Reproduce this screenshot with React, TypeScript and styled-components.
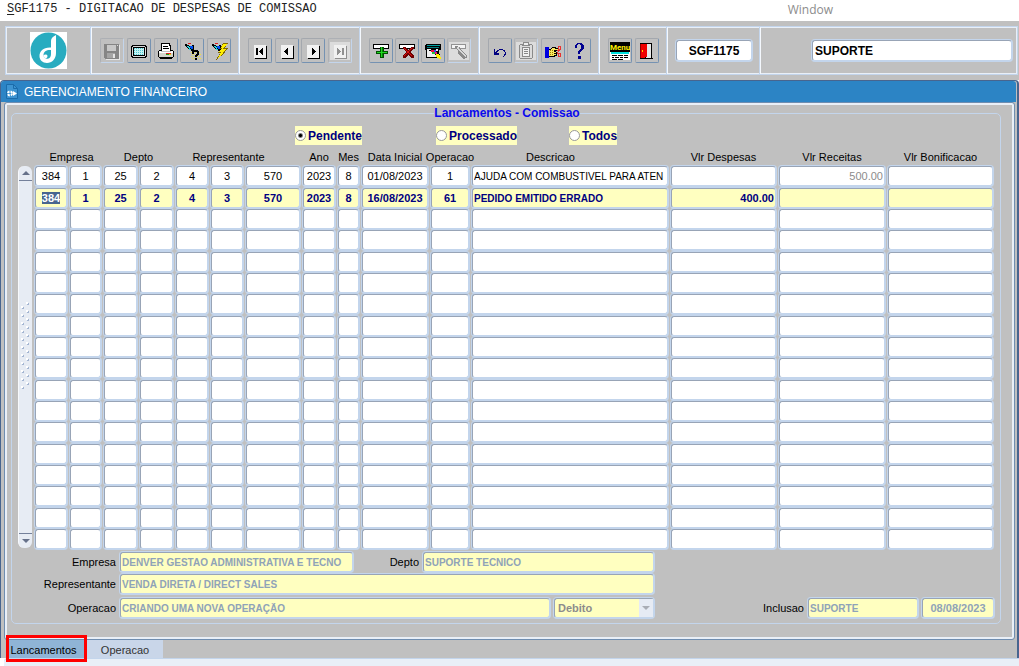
import React, { useEffect, useRef } from "react";
import styled, { createGlobalStyle, css } from "styled-components";

const GlobalStyle = createGlobalStyle`
  * { box-sizing: border-box; }
  body { margin: 0; background: #fff; font: 11px/14px "Liberation Sans", Arial, sans-serif; color: #000; }
  button, input, select { font: inherit; color: inherit; margin: 0; }
`;

const face = "#c0c0c0";
const line = "#c3d5ec";
const pale = "#e9eff7";
const edge = "#98a4b6";
const yellow = "#ffffc0";

const Page = styled.div`
  min-height: 100vh;
  display: flex;
  flex-direction: column;
`;

const MenuBar = styled.header`
  height: 21px;
  padding: 0 186px 0 7px;
  display: flex;
  justify-content: space-between;
`;
const Title = styled.h1`
  margin: 0;
  font: 12px/19px "Liberation Mono", "Courier New", monospace;
  color: #222;
  u { text-underline-offset: 2px; }
`;
const MenuLink = styled.a`
  font: 12px/19px "Open Sans", sans-serif;
  color: #8c8c8c;
  text-decoration: none;
`;

const ToolArea = styled.div`
  background: ${face};
  padding: 5px 1px 5px 5px;
`;
const Toolbar = styled.div`
  height: 49px;
  display: flex;
  border: 1px solid ${line};
  box-shadow: inset 0 0 0 1px ${pale};
`;
const Section = styled.div<{ $w?: number }>`
  ${(p) => (p.$w ? css`width: ${p.$w}px; flex: none;` : css`flex: 1;`)}
  display: flex;
  align-items: center;
  justify-content: space-between;
  padding: 0 8px;
  border-right: 1px solid #f4f8fd;
  box-shadow: inset -1px 0 0 ${line};
  &:last-child { border-right: 0; box-shadow: none; padding: 0 5px 0 51px; }
`;
const LogoBox = styled.div`
  width: 37px;
  height: 37px;
  margin: 0 auto;
  background: #fff;
`;
const ToolButton = styled.button`
  width: 24px;
  height: 25px;
  padding: 0;
  display: grid;
  place-items: center;
  background: ${face};
  border: 1px solid;
  border-color: #a4a8ae #7592b2 #7592b2 #a4a8ae;
  border-radius: 2px;
  &:disabled { border-color: #adb0b5 ${line} ${line} #adb0b5; }
  svg { display: block; }
`;

const fieldBox = css`
  border: 1px solid;
  border-color: ${edge} ${line} ${line} ${edge};
  border-radius: 3px;
  box-shadow: 0 0 0 1px ${line};
  outline: none;
`;
const ToolField = styled.input`
  ${fieldBox}
  width: 100%;
  height: 21px;
  padding: 0 2px;
  background: #fff;
  font-weight: bold;
  font-size: 12px;
`;
const CodeField = styled(ToolField)`
  text-align: center;
`;

const Frame = styled.main`
  background: ${face};
  border: solid #48658f;
  border-width: 1px 2px 0 1px;
  border-radius: 4px 4px 0 0;
`;
const FrameTitle = styled.div`
  height: 21px;
  display: flex;
  align-items: center;
  gap: 6px;
  padding-left: 5px;
  margin-right: 1px;
  background: #2c84c5;
  border-radius: 3px 3px 0 0;
  h2 { margin: 0; font: 12px/20px "Liberation Sans", Arial, sans-serif; color: #fff; }
`;
const Panel = styled.div`
  margin: 0 2px 0 3px;
  padding: 1px 13px 15px 4px;
  border: 1px solid #6f8db0;
  border-radius: 3px;
  box-shadow: inset 0 0 0 2px ${pale};
`;
const Group = styled.fieldset`
  min-width: 0;
  margin: 2px 0 0 2px;
  padding: 6px 4px 5px 6px;
  border: 1px solid ${line};
  border-radius: 5px;
`;
const Legend = styled.legend`
  margin: 0 auto;
  padding: 0;
  color: #0a0aee;
  font-size: 12px;
  font-weight: bold;
`;

const Filters = styled.div`
  display: grid;
  grid-template-columns: 141px 133px 48px;
  justify-content: center;
  justify-items: start;
  padding-right: 102px;
`;
const FilterLabel = styled.label`
  height: 19px;
  display: flex;
  gap: 2px;
  background: ${yellow};
  color: #000080;
  font-size: 12px;
  line-height: 20px;
  font-weight: bold;
`;
const Radio = styled.input`
  appearance: none;
  width: 11px;
  height: 11px;
  margin-top: 4px;
  border: 1px solid #999;
  border-radius: 50%;
  background: #fff;
  &:checked { background: radial-gradient(circle, #000 0 1px, #fff 3px); }
`;

const GridArea = styled.div`
  display: flex;
  gap: 3px;
`;
const Scrollbar = styled.div`
  width: 14px;
  flex: none;
  margin: 21px 0 2px;
  display: grid;
  grid-template-rows: 15px 1fr 15px;
  background: #e7ecf4;
  border-left: 1px solid #f7f9fc;
  border-radius: 6px;
  overflow: hidden;
`;
const Grip = styled.div`
  align-self: center;
  padding-bottom: 18px;
  svg { display: block; }
`;
const ScrollButton = styled.button<{ $down?: boolean }>`
  padding: 0;
  display: grid;
  place-items: center;
  background: transparent;
  border: 0;
  ${(p) => (p.$down ? "border-top" : "border-bottom")}: 1px solid #74809a;
`;

const Table = styled.table`
  flex: 1;
  width: 100%;
  min-width: 0;
  table-layout: fixed;
  border-collapse: collapse;
`;
const Th = styled.th<{ $left?: number; $right?: number }>`
  height: 21px;
  padding: 2px ${(p) => p.$right ?? 3}px 0 ${(p) => p.$left ?? 0}px;
  font-weight: normal;
  vertical-align: middle;
  div { display: flex; justify-content: center; white-space: nowrap; }
`;
const BodyRows = styled.tbody`
  td { padding: 0 3px 0 0; vertical-align: top; height: 21px; line-height: 0; }
  tr:nth-child(3n + 1) td { height: 22px; }
`;
const Cell = styled.input<{ $on?: boolean; $muted?: boolean; $align?: string; $caps?: boolean }>`
  ${fieldBox}
  display: block;
  width: 100%;
  height: 20px;
  padding: 0 1px;
  background: #fff;
  font-size: ${(p) => (p.$caps ? 10 : 11)}px;
  line-height: 14px;
  text-align: ${(p) => p.$align ?? "center"};
  color: ${(p) => (p.$muted ? "#8c8c8c" : "#000")};
  ${(p) => p.$on && css`background: ${yellow}; color: #000080; font-weight: bold;`}
  &::selection { background: #48658f; color: #fff; }
`;

const Details = styled.div`
  display: flex;
  flex-direction: column;
  padding: 2px 2px 0 0;
`;
const Line = styled.div<{ $gap?: number }>`
  display: flex;
  align-items: center;
  height: 20px;
  margin-top: ${(p) => p.$gap ?? 0}px;
`;
const FieldLabel = styled.label<{ $w: number; $push?: boolean }>`
  width: ${(p) => p.$w}px;
  flex: none;
  padding-right: 4px;
  text-align: right;
  ${(p) => p.$push && "margin-left: auto;"}
`;
const Info = styled.input<{ $w: number; $date?: boolean }>`
  ${fieldBox}
  width: ${(p) => p.$w}px;
  height: 20px;
  padding: 0 1px;
  background: ${yellow};
  color: #8fa3b8;
  font-weight: bold;
  font-size: ${(p) => (p.$date ? 11 : 10)}px;
  text-align: ${(p) => (p.$date ? "center" : "left")};
  margin-right: 4px;
  &:last-child { margin-right: 0; }
`;
const SelectBox = styled.div`
  position: relative;
  width: 100px;
  height: 20px;
  svg { position: absolute; right: 1px; top: 1px; pointer-events: none; }
`;
const Select = styled.select`
  ${fieldBox}
  appearance: none;
  width: 100%;
  height: 20px;
  padding: 0 3px;
  background: ${yellow};
  color: #8c8c8c;
  font-weight: bold;
  opacity: 1;
`;

const Tabs = styled.nav`
  display: flex;
  height: 18px;
  padding-left: 5px;
`;
const Tab = styled.button<{ $active?: boolean }>`
  position: relative;
  width: ${(p) => (p.$active ? 81 : 76)}px;
  padding: ${(p) => (p.$active ? "2px 6px 0 0" : "2px 0 0 0")};
  border: 0;
  background: ${(p) => (p.$active ? "#8fb4d6" : "#c9d6e9")};
  color: ${(p) => (p.$active ? "#000" : "#333")};
`;
const Marker = styled.span`
  position: absolute;
  inset: -5px 0 -4px 0;
  border: 3px solid #f00;
`;
const Footer = styled.footer`
  flex: 1;
  min-height: 8px;
  margin-left: 4px;
  background: ${pale};
  border-top: 1px solid ${line};
  border-radius: 4px 0 0 0;
`;

/* Toolbar glyphs, drawn on a 20x20 pixel grid. */
const Glyph = ({ children }: { children: React.ReactNode }) => (
  <svg width="20" height="20" viewBox="0 0 20 20" shapeRendering="crispEdges" aria-hidden="true">{children}</svg>
);

const Flashlight = () => (
  <>
    <path d="M3 3h2v1h2v1h3V4h2v5h-1v1H9V9H7V8H6V7H5V6H4V5H3z" fill="#000" />
    <path d="M8 5h3v3H9V7H8z" fill="#0050f0" />
    <path d="M5 5h2v1h1v2h1v1H7V7H6V6H5z" fill="#20d0e0" />
    <path d="M6 2h3v1H6z" fill="#e02020" />
  </>
);

const NavGlyph = ({ d, off }: { d: string; off?: boolean }) => (
  <Glyph>
    {off && <path d="M0 1h20v18H0z" fill="#dcdcdc" />}
    <path d="M5 5h12v13H5z" fill={off ? "#8f8f8f" : "#000"} />
    <path d="M4 4h12v13H4z" fill="#f1f1f1" />
    <path d={d} fill={off ? "#909090" : "#000"} />
  </Glyph>
);

const icons: Record<string, React.ReactNode> = {
  save: (
    <Glyph>
      <path d="M2 3h15v15H3v-1H2z" fill="#858585" />
      <path d="M5 4h9v6H5z" fill="#c8c8c8" />
      <path d="M15 4h1v1h-1z" fill="#ddd" />
      <path d="M5 12h8v5H5z" fill="#a4a4a4" />
      <path d="M11 13h2v4h-2z" fill="#e4e4e4" />
      <path d="M17 4h1v15H4v-1h13z" fill="#e6e6e6" />
    </Glyph>
  ),
  screen: (
    <Glyph>
      <path d="M3 4h14v1h1v11h-1v1H3v-1H2V5h1z" fill="#000" />
      <path d="M4 5h12v1h1v9h-1v1H4v-1H3V6h1z" fill="#d8d8d8" />
      <path d="M4 6h12v9H4z" fill="#000" />
      <path d="M5 7h10v7H5z" fill="#c4f4f4" />
      <path d="M5 7.500h10M5 9.500h10M5 11.500h10M5 13.500h10" stroke="#50c8d0" strokeDasharray="1 1" />
    </Glyph>
  ),
  print: (
    <Glyph>
      <path d="M5 2h9v2h1v6H5z" fill="#000" />
      <path d="M6 3h7v2h1v5H6z" fill="#fff" />
      <path d="M7 5h5v1H7zM7 7h6v1H7z" fill="#000" />
      <path d="M3 9h2v2h10V9h2v1h1v6h-1v1H3v-1H2v-6h1z" fill="#000" />
      <path d="M3 10h2v1h10v-1h2v2H3z" fill="#fff" />
      <path d="M3 12h14v4H3z" fill="#d4d4cc" />
      <path d="M10 12h5v1h-5z" fill="#e02020" />
      <path d="M10 13h3v1h-3z" fill="#20a020" />
      <path d="M13 13h2v1h-2z" fill="#e8e000" />
      <path d="M4 17h12v1H4z" fill="#000" />
    </Glyph>
  ),
  query: (
    <Glyph>
      <Flashlight />
      <path d="M9 11.500h10M10 13.500h9M9 15.500h10M10 17.500h9" stroke="#f0e040" strokeDasharray="1 1" />
      <path d="M11 9h5v1h1v4h-1v1h-1v1h-2v-2h1v-1h1v-2h-3v2h-2v-3h1zM13 17h2v2h-2z" fill="#000" />
    </Glyph>
  ),
  execute: (
    <Glyph>
      <Flashlight />
      <path d="M14 2h5l-3 5h3l-4 4h2L7 19l4-7H8l4-4h-1z" fill="#806800" />
      <path d="M14 3h4l-4 5h4l-5 4h2l-6 5 3-6H9l4-4h-1z" fill="#ffee00" />
    </Glyph>
  ),
  first: <NavGlyph d="M6 7h2v7H6zM9 10h1V9h1V8h1V7h1v7h-1v-1h-1v-1h-1v-1H9z" />,
  prev: <NavGlyph d="M7 10h1V9h1V8h1V7h1v7h-1v-1H9v-1H8v-1H7z" />,
  next: <NavGlyph d="M9 7h1v1h1v1h1v1h1v1h-1v1h-1v1h-1v1H9z" />,
  last: <NavGlyph off d="M7 7h1v1h1v1h1v1h1v1h-1v1H9v1H8v1H7zM12 7h2v7h-2z" />,
  add: (
    <Glyph>
      <path d="M2 3h16v5H2z" fill="#000" />
      <path d="M3 4h14v3H3z" fill="#fff" />
      <path d="M9 6h4v4h4v3h-4v4H9v-4H5v-3h4z" fill="#005000" />
      <path d="M10 6h1v5h5v1h-5v4h-1v-4H6v-1h4z" fill="#20d820" />
      <path d="M11 7h1v4h-1zM11 12h1v4h-1z" fill="#008800" />
    </Glyph>
  ),
  remove: (
    <Glyph>
      <path d="M2 3h16v5H2z" fill="#000" />
      <path d="M3 4h14v3H3z" fill="#fff" />
      <path d="M6 6h3v1h1v1h1v1h1V8h1V7h1V6h3v2h-1v1h-1v1h-1v2h1v1h1v1h1v3h-3v-1h-1v-1h-1v-1h-1v1h-1v1H9v1H6v-3h1v-1h1v-1h1v-2H8V9H7V8H6z" fill="#700000" />
      <path d="M7 7h1v1h1v1h1v1h2V9h1V8h1V7h1v1h-1v1h-1v1h-1v2h1v1h1v1h1v1h-1v-1h-1v-1h-1v-1h-2v1H9v1H8v1H7v-1h1v-1h1v-1h1v-2H9V9H8V8H7z" fill="#d81010" />
    </Glyph>
  ),
  lock: (
    <Glyph>
      <path d="M3 3h15v6h-2v8H3V9H2V4h1z" fill="#000" />
      <path d="M4 4h13v1H4z" fill="#00a0a0" />
      <path d="M4 6h12v1H4z" fill="#008080" />
      <path d="M4 8h11v8H4z" fill="#f0f0f0" />
      <path d="M6 9h2V8h5v2h2v3h2v2h-3v-1h-2v-1h-2v-2H8v-1H6z" fill="#000" />
      <path d="M8 9h3v2H8z" fill="#f01040" />
      <path d="M11 9h2v2h-2z" fill="#3040f0" />
      <path d="M9 11h3v2H9z" fill="#20c040" />
      <path d="M12 11h2v2h-2z" fill="#f01080" />
      <path d="M13 13h3v1h1v2h1v2h-2v-1h-2v-1h-1z" fill="#fff000" />
    </Glyph>
  ),
  clear: (
    <Glyph>
      <path d="M0 1h20v18H0z" fill="#dcdcdc" />
      <path d="M2 3h15v5H2z" fill="#929292" />
      <path d="M3 4h13v3H3z" fill="#f4f4f4" />
      <path d="M6 5h3v1h2v2h1v1h1v1h1v1h1v1h1v1h1v1h1v3h-2v1h-2v-1h-1v-1h-1v-1h-1v-1h-1v-1h-1v-2H9v-2H8V8H7V7H6z" fill="#8a8a8a" />
      <path d="M8 6h2v2h1v1h1v1h1v1h1v1h1v1h1v1h1v2h-1v-1h-1v-1h-1v-1h-1v-1h-1v-1h-1v-1h-1V9H9V8H8z" fill="#d8d8d8" />
    </Glyph>
  ),
  undo: (
    <Glyph>
      <path d="M4 8h1v3h1v-1h1V9h2V8h4v1h2v2h1v3h-1v1h-1v1h-1v-1h1v-2h1v-2h-1v-1h-1V9H9v1H8v1H7v1h2v2H4z" fill="#000080" />
    </Glyph>
  ),
  paste: (
    <Glyph>
      <path d="M0 1h20v18H0z" fill="#dcdcdc" />
      <path d="M4 3h3V1h6v2h3v1h1v13h-1v1H4v-1H3V4h1z" fill="#8a8a8a" />
      <path d="M4 4h12v13H4z" fill="#dcdcdc" />
      <path d="M6 6h8v10H6z" fill="#8a8a8a" />
      <path d="M7 7h6v8H7z" fill="#f1f1f1" />
      <path d="M8 8h4v1H8zM8 10h4v1H8zM8 12h4v1H8z" fill="#888" />
      <path d="M6 3h8v2H6z" fill="#8a8a8a" />
      <path d="M8 2h4v2H8z" fill="#eee" />
    </Glyph>
  ),
  cut: (
    <Glyph>
      <path d="M2 6h4v11H2z" fill="#0000e0" />
      <path d="M6 8h2V7h1V6h4v1h3v3h-3v1h2v2h-1v2h-2v1H6z" fill="#000" />
      <path d="M6 9h2V8h1V7h3v1h3v1h-4v2h2v1h-2v1h2v1h-2v1H6z" fill="#f8e860" />
      <path d="M7.500 9v6M9.500 9v5" stroke="#a08000" strokeDasharray="1 1" />
      <path d="M15.500 5.500h2v3h-2zM15.500 12.500h2v3h-2zM14 9.500h2M14 12.500l3-4" stroke="#e83030" fill="none" />
    </Glyph>
  ),
  help: (
    <Glyph>
      <path d="M8 2h5v1h1v1h1v4h-1v1h-1v1h-1v1h-1v2H9v-3h1V9h1V8h1V4h-1V3H9v1H8v3H6V4h1V3h1zM9 15h3v3H9z" fill="#000090" />
    </Glyph>
  ),
  menu: (
    <Glyph>
      <path d="M0 1h20v9H0z" fill="#000" />
      <text x="0" y="9" fill="#ffee00" fontSize="8" fontWeight="bold" fontFamily="Roboto, sans-serif">Menu</text>
      <path d="M0 10h20v9H0z" fill="#fff" />
      <path d="M0 10h20v1H0z" fill="#000" />
      <path d="M1 11h18v2H1z" fill="#00e0e0" />
      <path d="M2 14h5v1H2zM8 14h5v1H8zM14 14h4v1h-4zM2 16h2v1H2zM5 16h4v1H5zM10 16h3v1h-3zM14 16h4v1h-4zM2 18h5v1H2zM8 18h5v1H8z" fill="#000" />
    </Glyph>
  ),
  exit: (
    <Glyph>
      <path d="M3 2h12v15h1v1H3z" fill="#000" />
      <path d="M9 3h5v14H9z" fill="#e8e8e8" />
      <path d="M4 3h6v13H8v1H4z" fill="#f00000" />
      <path d="M3 3h1v14H3z" fill="#900000" />
      <path d="M5 9h1v2H5z" fill="#ffd000" />
    </Glyph>
  ),
};

type Tool = [icon: string, label: string, disabled?: boolean];
const toolGroups: { width: number; tools: Tool[] }[] = [
  { width: 148, tools: [["save", "Salvar", true], ["screen", "Tela"], ["print", "Imprimir"], ["query", "Consultar"], ["execute", "Executar"]] },
  { width: 121, tools: [["first", "Primeiro"], ["prev", "Anterior"], ["next", "Proximo"], ["last", "Ultimo", true]] },
  { width: 119, tools: [["add", "Inserir"], ["remove", "Remover"], ["lock", "Bloquear"], ["clear", "Limpar", true]] },
  { width: 120, tools: [["undo", "Desfazer"], ["paste", "Colar", true], ["cut", "Editar"], ["help", "Ajuda"]] },
  { width: 68, tools: [["menu", "Menu"], ["exit", "Sair"]] },
];

type Column = { name: string; width?: number; align?: string; caps?: boolean };
const columns: Column[] = [
  { name: "Empresa", width: 35 },
  { name: "Filial", width: 34 },
  { name: "Depto", width: 36 },
  { name: "Subdepto", width: 36 },
  { name: "Representante", width: 35 },
  { name: "Representante 2", width: 35 },
  { name: "Representante 3", width: 57 },
  { name: "Ano", width: 35 },
  { name: "Mes", width: 24 },
  { name: "Data Inicial", width: 69 },
  { name: "Operacao", width: 41 },
  { name: "Descricao", align: "left", caps: true },
  { name: "Vlr Despesas", width: 108, align: "right" },
  { name: "Vlr Receitas", width: 109, align: "right" },
  { name: "Vlr Bonificacao", width: 108, align: "right" },
];
const headers: { text: string; span: number; left?: number; right?: number }[] = [
  { text: "Empresa", span: 2, left: 4, right: 0 },
  { text: "Depto", span: 2 },
  { text: "Representante", span: 3, right: 22 },
  { text: "Ano", span: 1 },
  { text: "Mes", span: 1 },
  { text: "Data Inicial", span: 1 },
  { text: "Operacao", span: 1 },
  { text: "Descricao", span: 1, right: 42 },
  { text: "Vlr Despesas", span: 1 },
  { text: "Vlr Receitas", span: 1 },
  { text: "Vlr Bonificacao", span: 1 },
];
const records = [
  ["384", "1", "25", "2", "4", "3", "570", "2023", "8", "01/08/2023", "1", "AJUDA COM COMBUSTIVEL PARA ATEN", "", "500.00", ""],
  ["384", "1", "25", "2", "4", "3", "570", "2023", "8", "16/08/2023", "61", "PEDIDO EMITIDO ERRADO", "400.00", "", ""],
];
const rows = Array.from({ length: 18 }, (_, i) => records[i] ?? columns.map(() => ""));
const CURRENT = 1;

const Logo = () => (
  <svg width="37" height="37" viewBox="0 0 37 37" role="img" aria-label="Denver">
    <circle cx="18.500" cy="18.500" r="18" fill="#28acc0" />
    <path d="M26 3v18c0 6-4 10-9 10-4.500 0-7.500-3-7.500-7 0-5 4-9 11.500-8.500V9c0-3 2-4.500 5-6z" fill="#fff" />
    <path d="M21 18c-4-.5-7.500 1.500-7.500 5 0 2.500 2 4 4 3.800 2.500-.2 3.500-2.300 3.500-4.800z" fill="#28acc0" />
    <path d="M13.500 23c2-1 4-.5 4 1s-1 2-2 2.500c-1-.5-2-2-2-3.500z" fill="#fff" />
  </svg>
);

export default function App() {
  const current = useRef<HTMLInputElement>(null);
  useEffect(() => {
    current.current?.focus();
    current.current?.select();
  }, []);

  return (
    <Page>
      <GlobalStyle />
      <MenuBar>
        <Title><u>S</u>GF1175 - DIGITACAO DE DESPESAS DE COMISSAO</Title>
        <MenuLink href="#window">Window</MenuLink>
      </MenuBar>
      <ToolArea>
        <Toolbar>
          <Section $w={86}><LogoBox><Logo /></LogoBox></Section>
          {toolGroups.map((group) => (
            <Section key={group.width} $w={group.width}>
              {group.tools.map(([icon, label, disabled]) => (
                <ToolButton key={icon} type="button" aria-label={label} disabled={disabled}>{icons[icon]}</ToolButton>
              ))}
            </Section>
          ))}
          <Section $w={93}><CodeField aria-label="Programa" defaultValue="SGF1175" /></Section>
          <Section><ToolField aria-label="Usuario" defaultValue="SUPORTE" /></Section>
        </Toolbar>
      </ToolArea>

      <Frame>
        <FrameTitle>
          <svg width="12" height="15" viewBox="0 0 12 15" aria-hidden="true">
            <path d="M.5.5h7l4 4v10H.5z" fill="#3d94d2" stroke="#1b6cab" />
            <path d="M7.500.5v4h4" fill="none" stroke="#1b6cab" />
            <circle cx="4" cy="9.500" r="2" fill="none" stroke="#fff" strokeWidth="2" strokeDasharray="2 1" />
            <path d="M7 7l4 2.500L7 12z" fill="#fff" />
          </svg>
          <h2>GERENCIAMENTO FINANCEIRO</h2>
        </FrameTitle>
        <Panel>
          <Group>
            <Legend>Lancamentos - Comissao</Legend>
            <Filters>
              {["Pendente", "Processado", "Todos"].map((name, i) => (
                <FilterLabel key={name}>
                  <Radio type="radio" name="status" defaultChecked={i === 0} />
                  {name}
                </FilterLabel>
              ))}
            </Filters>
            <GridArea>
              <Scrollbar>
                <ScrollButton type="button" aria-label="Acima">
                  <svg width="8" height="4" viewBox="0 0 8 4"><path d="M4 0l4 4H0z" fill="#66718a" /></svg>
                </ScrollButton>
                <Grip>
                  <svg width="13" height="92" viewBox="0 0 13 92" shapeRendering="crispEdges" aria-hidden="true">
                    {Array.from({ length: 11 }, (_, i) => (
                      <g key={i}>
                        <path d={`M7 ${i * 8}h2v2h-2zM2 ${i * 8 + 4}h2v2h-2z`} fill="#fff" />
                        <path d={`M8 ${i * 8 + 2}h1v-1h1v2h-2zM3 ${i * 8 + 6}h1v-1h1v2h-2z`} fill="#a3b5d2" />
                      </g>
                    ))}
                  </svg>
                </Grip>
                <ScrollButton $down type="button" aria-label="Abaixo">
                  <svg width="8" height="4" viewBox="0 0 8 4"><path d="M0 0h8L4 4z" fill="#66718a" /></svg>
                </ScrollButton>
              </Scrollbar>
              <Table>
                <colgroup>
                  {columns.map((c) => <col key={c.name} width={c.width} />)}
                </colgroup>
                <thead>
                  <tr>
                    {headers.map((h) => (
                      <Th key={h.text} scope="col" colSpan={h.span} $left={h.left} $right={h.right}><div>{h.text}</div></Th>
                    ))}
                  </tr>
                </thead>
                <BodyRows>
                  {rows.map((row, r) => (
                    <tr key={r}>
                      {columns.map((c, i) => (
                        <td key={c.name}>
                          <Cell
                            ref={r === CURRENT && i === 0 ? current : undefined}
                            aria-label={`${c.name} ${r + 1}`}
                            defaultValue={row[i]}
                            $on={r === CURRENT}
                            $muted={r === 0 && i === 13}
                            $align={c.align}
                            $caps={c.caps}
                          />
                        </td>
                      ))}
                    </tr>
                  ))}
                </BodyRows>
              </Table>
            </GridArea>
            <Details>
              <Line>
                <FieldLabel $w={102} htmlFor="empresa">Empresa</FieldLabel>
                <Info $w={233} id="empresa" readOnly value="DENVER GESTAO ADMINISTRATIVA E TECNO" />
                <FieldLabel $w={66} htmlFor="depto">Depto</FieldLabel>
                <Info $w={231} id="depto" readOnly value="SUPORTE TECNICO" />
              </Line>
              <Line $gap={2}>
                <FieldLabel $w={102} htmlFor="representante">Representante</FieldLabel>
                <Info $w={534} id="representante" readOnly value="VENDA DIRETA / DIRECT SALES" />
              </Line>
              <Line $gap={4}>
                <FieldLabel $w={102} htmlFor="operacao">Operacao</FieldLabel>
                <Info $w={430} id="operacao" readOnly value="CRIANDO UMA NOVA OPERAÇÃO" />
                <SelectBox>
                  <Select aria-label="Tipo" disabled defaultValue="Debito"><option>Debito</option></Select>
                  <svg width="14" height="18" viewBox="0 0 14 18" aria-hidden="true">
                    <path d="M0 0h14v18H0z" fill="#e6ebf4" />
                    <path d="M3 7h8l-4 4z" fill="#a9adb5" />
                  </svg>
                </SelectBox>
                <FieldLabel $w={70} $push htmlFor="inclusao">Inclusao</FieldLabel>
                <Info $w={110} id="inclusao" readOnly value="SUPORTE" />
                <Info $w={72} $date aria-label="Data de inclusao" readOnly value="08/08/2023" />
              </Line>
            </Details>
          </Group>
        </Panel>
        <Tabs>
          <Tab $active type="button">Lancamentos<Marker /></Tab>
          <Tab type="button">Operacao</Tab>
        </Tabs>
      </Frame>
      <Footer />
    </Page>
  );
}
